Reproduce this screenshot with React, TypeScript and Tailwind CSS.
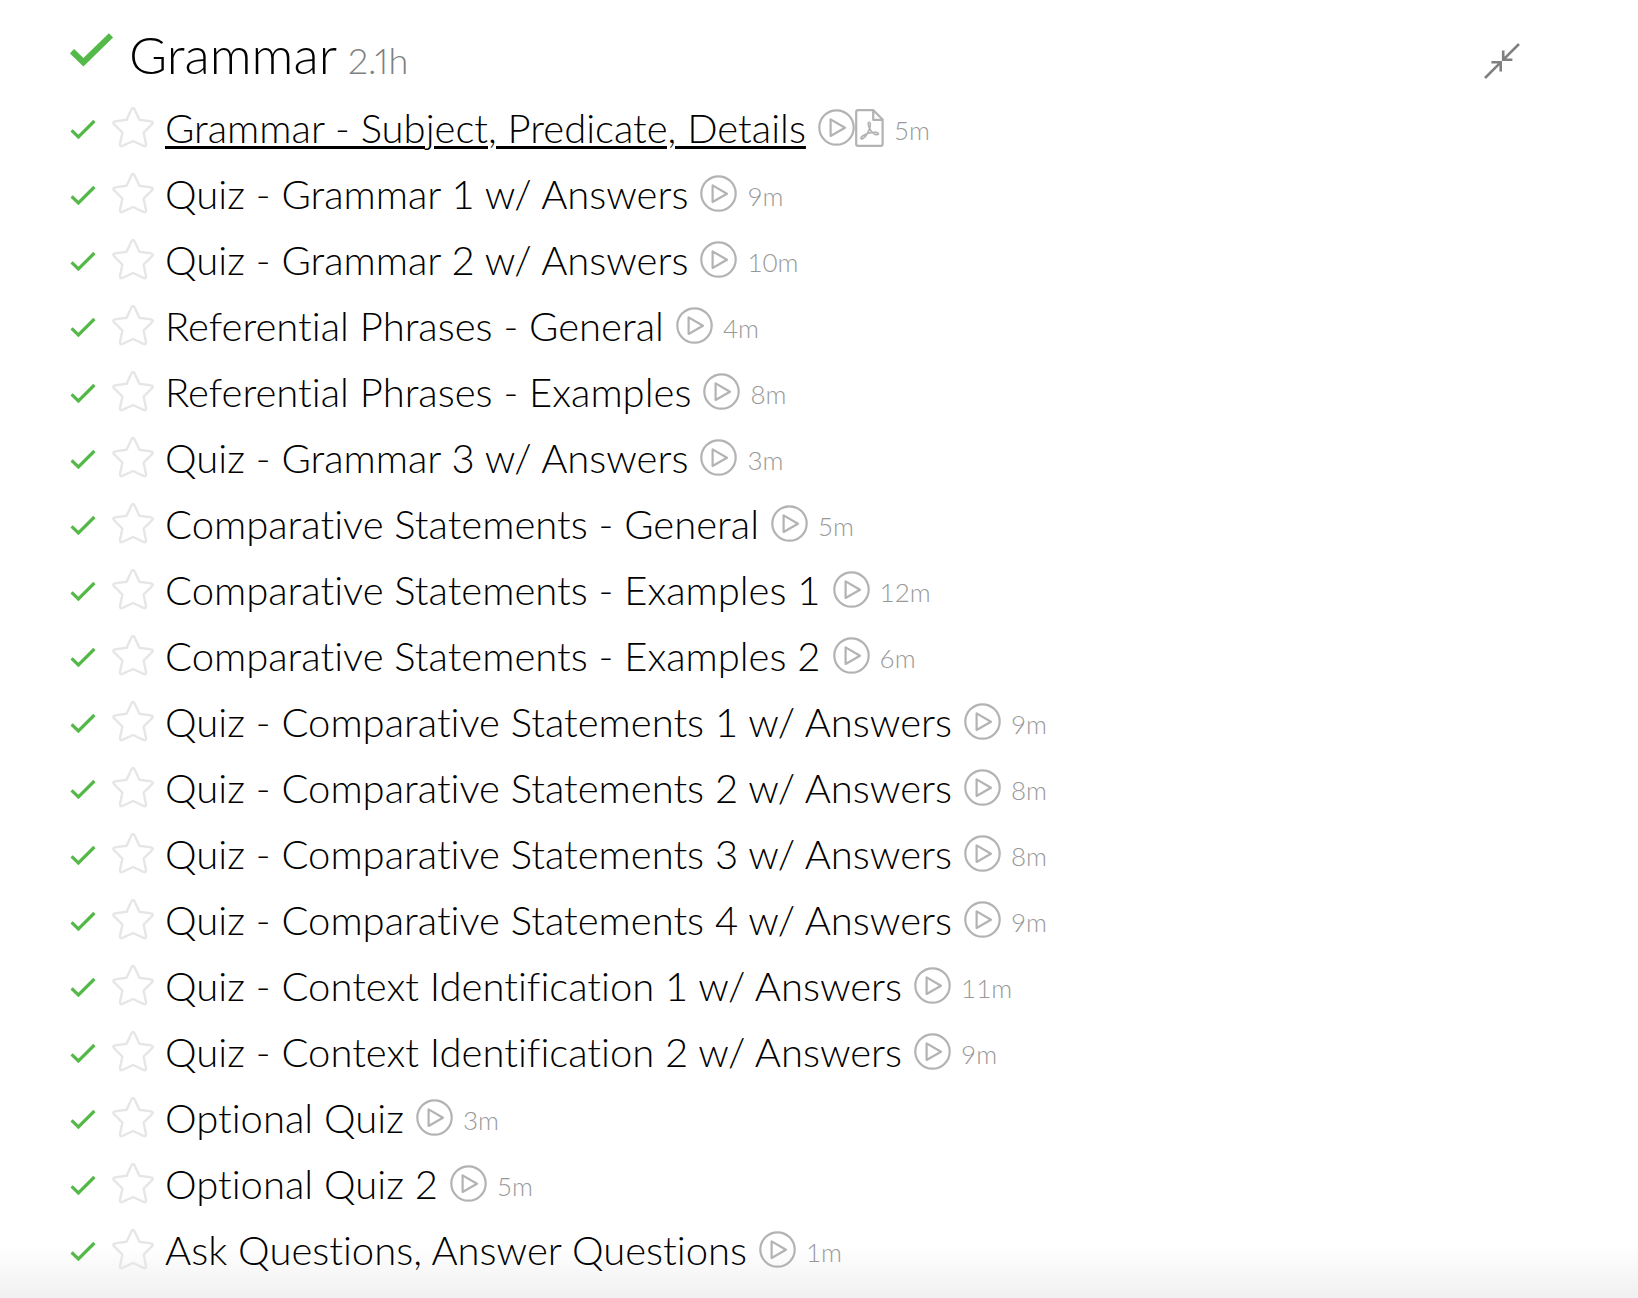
import React, { useState } from 'react';

type Lesson = {
  title: string;
  minutes: number;
  pdf?: boolean;
};

const lessons: Lesson[] = [
  { title: 'Grammar - Subject, Predicate, Details', minutes: 5, pdf: true },
  { title: 'Quiz - Grammar 1 w/ Answers', minutes: 9 },
  { title: 'Quiz - Grammar 2 w/ Answers', minutes: 10 },
  { title: 'Referential Phrases - General', minutes: 4 },
  { title: 'Referential Phrases - Examples', minutes: 8 },
  { title: 'Quiz - Grammar 3 w/ Answers', minutes: 3 },
  { title: 'Comparative Statements - General', minutes: 5 },
  { title: 'Comparative Statements - Examples 1', minutes: 12 },
  { title: 'Comparative Statements - Examples 2', minutes: 6 },
  { title: 'Quiz - Comparative Statements 1 w/ Answers', minutes: 9 },
  { title: 'Quiz - Comparative Statements 2 w/ Answers', minutes: 8 },
  { title: 'Quiz - Comparative Statements 3 w/ Answers', minutes: 8 },
  { title: 'Quiz - Comparative Statements 4 w/ Answers', minutes: 9 },
  { title: 'Quiz - Context Identification 1 w/ Answers', minutes: 11 },
  { title: 'Quiz - Context Identification 2 w/ Answers', minutes: 9 },
  { title: 'Optional Quiz', minutes: 3 },
  { title: 'Optional Quiz 2', minutes: 5 },
  { title: 'Ask Questions, Answer Questions', minutes: 1 },
];

const CheckIcon = ({ className }: { className: string }) => (
  <svg viewBox="0 0 26 20" className={className} fill="none" stroke="#54b948" strokeWidth="3.2" aria-hidden="true">
    <path d="M1.6 11.4 8.4 18 24.4 2" />
  </svg>
);

const BigCheckIcon = () => (
  <svg viewBox="0 0 44 34" className="h-[34px] w-11" fill="none" stroke="#54b948" strokeWidth="6" aria-hidden="true">
    <path d="M2 18.2 13.4 29.2 41 2.4" />
  </svg>
);

const StarIcon = () => (
  <svg viewBox="0 0 42 42" className="size-[42px]" fill="none" stroke="#e6e6e6" strokeWidth="2.4" strokeLinejoin="round" aria-hidden="true">
    <path d="M19.6 2.1Q21 -.2 22.4 2.1L27.4 12.8 39 14.4Q42 15.2 39.8 17.4L31.6 25.6 34 37Q34.2 40.2 31.4 38.8L21 34 10.6 38.8Q7.8 40.2 8 37L10.4 25.6 2.2 17.4Q0 15.2 3 14.4L14.6 12.8Z" />
  </svg>
);

const PlayIcon = () => (
  <svg viewBox="0 0 37 37" className="size-[37px]" fill="none" stroke="#b3b3b3" strokeWidth="2.2" strokeLinejoin="round" aria-hidden="true">
    <circle cx="18.5" cy="18.5" r="17.2" />
    <path d="M12.6 10.4V27L27 18.7Z" />
  </svg>
);

const PdfIcon = () => (
  <svg viewBox="0 0 29 38" className="h-[38px] w-[29px]" fill="none" stroke="#b3b3b3" strokeWidth="2.2" strokeLinejoin="round" aria-hidden="true">
    <path d="M3 1.2H18.4L27.6 10.6V35Q27.6 36.8 25.8 36.8H3Q1.2 36.8 1.2 35V3Q1.2 1.2 3 1.2Z" />
    <path d="M18.2 1.4V10.8H27.4" />
    <path
      strokeWidth="1.6"
      d="M14.2 13.2C12.6 13.4 13.2 17 14.6 19.4C16.4 22.8 19.6 26 22 25.8C24.6 25.4 23.6 23.6 21 23.4C16.6 23.2 10.6 24.8 7.6 27C5.2 28.8 5.6 30.4 7.2 30C10 28.8 13.2 23.2 14.6 19.4C15.6 16.4 15.8 13.2 14.2 13.2Z"
    />
  </svg>
);

const CollapseIcon = () => (
  <svg viewBox="0 0 36 36" className="size-9" fill="none" stroke="#808080" strokeWidth="2.6" aria-hidden="true">
    <path d="M35 1 19.6 16.4M19.2 7.6V16.8H28.4" />
    <path d="M1 35 16.4 19.6M7.4 19.3H16.7V28.6" />
  </svg>
);

const LessonRow = ({ lesson, active }: { lesson: Lesson; active: boolean }) => {
  const [starred, setStarred] = useState(false);

  return (
    <li className="flex h-[66px] items-center pb-[3px]">
      <CheckIcon className="mt-[3px] mr-4 h-5 w-[26px] shrink-0" />
      <button
        type="button"
        aria-label={`Star ${lesson.title}`}
        aria-pressed={starred}
        onClick={() => setStarred(!starred)}
        className="mr-[11px] shrink-0 cursor-pointer"
      >
        <StarIcon />
      </button>
      <div className="flex items-center whitespace-nowrap">
        <a
          href="#lesson"
          className={`text-[40px] leading-[48px] text-black ${
            active ? 'underline decoration-3 underline-offset-3' : ''
          }`}
        >
          {lesson.title}
        </a>
        <span className="ml-3 flex">
          <PlayIcon />
          {lesson.pdf && <PdfIcon />}
        </span>
        <span className="ml-2.5 pt-[5px] text-[26px] leading-8 text-[#999]">{lesson.minutes}m</span>
      </div>
    </li>
  );
};

export default function App() {
  const [open, setOpen] = useState(true);

  return (
    <main className="min-h-screen bg-white bg-linear-to-t from-[#f0f0f0] to-white to-[52px] pl-[70px] pr-[118px] pb-[14px] font-['Lato',sans-serif] font-light [font-variant-ligatures:no-common-ligatures]">
      <header className="flex h-24 items-center pt-5">
        <div className="mb-4 mr-[15px] shrink-0">
          <BigCheckIcon />
        </div>
        <div className="mb-1.5 flex items-baseline">
          <h2 className="text-[52px] leading-[60px] text-black">Grammar</h2>
          <span className="ml-[11px] text-[36px] text-[#808080] proportional-nums">2.1h</span>
        </div>
        <button
          type="button"
          aria-label="Collapse section"
          aria-expanded={open}
          onClick={() => setOpen(!open)}
          className="mt-1.5 ml-auto cursor-pointer"
        >
          <CollapseIcon />
        </button>
      </header>

      {open && (
        <ul>
          {lessons.map((lesson, i) => (
            <LessonRow key={lesson.title} lesson={lesson} active={i === 0} />
          ))}
        </ul>
      )}
    </main>
  );
}
